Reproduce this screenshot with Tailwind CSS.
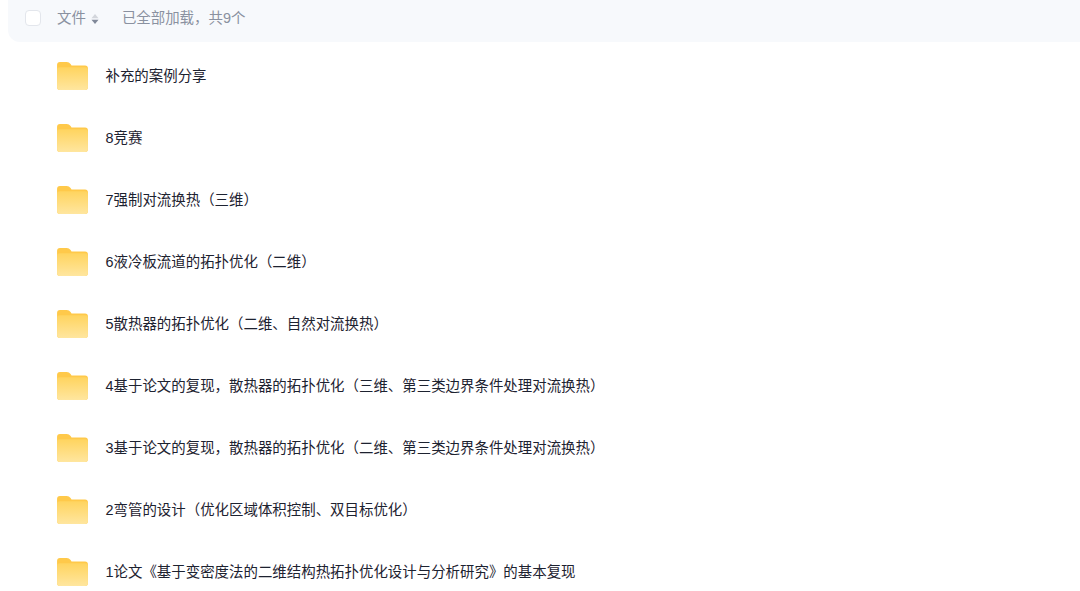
<!DOCTYPE html>
<html lang="zh-CN">
<head>
    <meta charset="UTF-8">
    <title>文件列表</title>
    <script src="https://cdn.jsdelivr.net/npm/@tailwindcss/browser@4"></script>
</head>
<body class="bg-white overflow-hidden font-['Liberation_Sans','Noto_Sans_CJK_SC',sans-serif]">
    <svg width="0" height="0" class="absolute">
        <defs>
            <linearGradient id="folderBody" x1="0" y1="0" x2="0" y2="1">
                <stop offset="0" stop-color="#ffd45f"/>
                <stop offset="1" stop-color="#ffe69f"/>
            </linearGradient>
            <symbol id="folder" viewBox="0 0 32 29">
                <path d="M0 3Q0 0 3 0H10Q12.500 0 14 2L15 3.500H29Q32 3.500 32 6.500V26Q32 29 29 29H3Q0 29 0 26Z" fill="#ffc94a"/>
                <path d="M0 8Q0 5.500 3 5.500H29Q32 5.500 32 8V26Q32 29 29 29H3Q0 29 0 26Z" fill="url(#folderBody)"/>
            </symbol>
        </defs>
    </svg>

    <!-- Header -->
    <div class="ml-2 h-[42px] bg-[#f7f9fc] rounded-bl-xl flex items-center pl-[17px] text-[14.45px] text-[#8a91a0]">
        <div class="w-4 h-4 bg-white border border-[#e3e6ec] rounded mt-[-6px]"></div>
        <div class="flex items-center ml-4 mt-[-4px]">
            <span>文件</span>
            <svg class="ml-[5px] mt-[1px]" width="8" height="12" viewBox="0 0 8 12">
                <path d="M4 1L7.500 5.200H0.500Z" fill="#d3d6dc"/>
                <path d="M4 11L7.500 6.800H0.500Z" fill="#818999"/>
            </svg>
        </div>
        <span class="ml-[23px] mt-[-4px]">已全部加载，共9个</span>
    </div>

    <!-- Rows -->
    <div class="pl-[57px] pt-[20px] flex flex-col gap-[34px] text-[14.45px] text-[#1d2230]">
        <div class="flex items-center h-7 gap-[17.5px]"><svg class="w-[31px] h-7 shrink-0"><use href="#folder"/></svg><span class="pt-[2px]">补充的案例分享</span></div>
        <div class="flex items-center h-7 gap-[17.5px]"><svg class="w-[31px] h-7 shrink-0"><use href="#folder"/></svg><span class="pt-[2px]">8竞赛</span></div>
        <div class="flex items-center h-7 gap-[17.5px]"><svg class="w-[31px] h-7 shrink-0"><use href="#folder"/></svg><span class="pt-[2px]">7强制对流换热（三维）</span></div>
        <div class="flex items-center h-7 gap-[17.5px]"><svg class="w-[31px] h-7 shrink-0"><use href="#folder"/></svg><span class="pt-[2px]">6液冷板流道的拓扑优化（二维）</span></div>
        <div class="flex items-center h-7 gap-[17.5px]"><svg class="w-[31px] h-7 shrink-0"><use href="#folder"/></svg><span class="pt-[2px]">5散热器的拓扑优化（二维、自然对流换热）</span></div>
        <div class="flex items-center h-7 gap-[17.5px]"><svg class="w-[31px] h-7 shrink-0"><use href="#folder"/></svg><span class="pt-[2px]">4基于论文的复现，散热器的拓扑优化（三维、第三类边界条件处理对流换热）</span></div>
        <div class="flex items-center h-7 gap-[17.5px]"><svg class="w-[31px] h-7 shrink-0"><use href="#folder"/></svg><span class="pt-[2px]">3基于论文的复现，散热器的拓扑优化（二维、第三类边界条件处理对流换热）</span></div>
        <div class="flex items-center h-7 gap-[17.5px]"><svg class="w-[31px] h-7 shrink-0"><use href="#folder"/></svg><span class="pt-[2px]">2弯管的设计（优化区域体积控制、双目标优化）</span></div>
        <div class="flex items-center h-7 gap-[17.5px]"><svg class="w-[31px] h-7 shrink-0"><use href="#folder"/></svg><span class="pt-[2px]">1论文《基于变密度法的二维结构热拓扑优化设计与分析研究》的基本复现</span></div>
    </div>
</body>
</html>
